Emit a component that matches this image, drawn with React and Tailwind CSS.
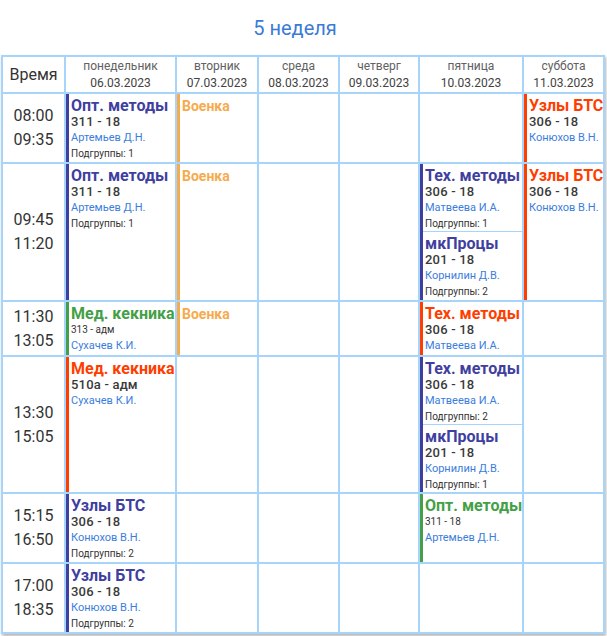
import React from "react";

const barClass = {
  indigo: "border-[#3f3f9f]",
  red: "border-[#ff3d00]",
  green: "border-[#43a047]",
  orange: "border-[#f5ab4e]",
};
const textClass = {
  indigo: "text-[#3f3f9f]",
  red: "text-[#ff3d00]",
  green: "text-[#43a047]",
  orange: "text-[#f5ab4e]",
};

function LessonBody({ c, title, room, small, teacher, group, mil, className = "" }) {
  return (
    <div className={"flex flex-col pl-[2px] pt-[4px] " + className}>
      <div
        className={
          "font-bold whitespace-nowrap leading-[16px] " +
          (mil ? "text-[14px] " : "text-[16px] ") +
          textClass[c]
        }
      >
        {title}
      </div>
      {room && (
        <div
          className={
            "leading-[16px] whitespace-nowrap " +
            (small ? "text-[10px] text-[#333]" : "text-[13px] font-medium tracking-[0.2px] text-[#3a3a3a]")
          }
        >
          {room}
        </div>
      )}
      {teacher && (
        <div className="leading-[16px] text-[11px] text-[#3b7ddd] whitespace-nowrap">{teacher}</div>
      )}
      {group && (
        <div className="leading-[16px] text-[10px] text-[#333] whitespace-nowrap">Подгруппы: {group}</div>
      )}
    </div>
  );
}

function Lesson(props) {
  return (
    <div className={"h-full bg-white border-l-[3px] " + barClass[props.c]}>
      <LessonBody {...props} />
    </div>
  );
}

function Double({ c, a, b }) {
  return (
    <div className={"h-full bg-white border-l-[3px] flex flex-col " + barClass[c]}>
      <LessonBody c={c} {...a} className="h-[68px] shrink-0 border-b border-[#a6d4fa]" />
      <LessonBody c={c} {...b} className="flex-1" />
    </div>
  );
}

function Cell({ children }) {
  return <div className="bg-white min-w-0">{children}</div>;
}

function Time({ a, b }) {
  return (
    <div className="bg-white flex flex-col items-center justify-center text-[16px] leading-[24px] text-[#333]">
      <div>{a}</div>
      <div>{b}</div>
    </div>
  );
}

function Head({ d, date }) {
  return (
    <div className="bg-white flex flex-col items-center justify-center text-[12px] leading-[17px]">
      <div className="text-[#616161]">{d}</div>
      <div className="text-[#424242]">{date}</div>
    </div>
  );
}

export default function App() {
  return (
    <div className="w-[607px] h-[636px] bg-white" style={{ fontFamily: "Roboto, 'Noto Sans', sans-serif" }}>
      <div className="h-[55px] pt-[14px] pr-[17px] text-center text-[20px] leading-[28px] text-[#3b7bd6]">5 неделя</div>
      <div className="ml-[1px] w-[604px] grid grid-cols-[61px_109px_80px_79px_78px_102px_79px] grid-rows-[35px_68px_136px_53px_135px_68px_68px] gap-[2px] p-[2px] bg-[#a6d4fa] shadow-[1px_2px_3px_rgba(0,0,0,0.3)]">
        <div className="bg-white flex items-center justify-center text-[16px] text-[#333]">Время</div>
        <Head d="понедельник" date="06.03.2023" />
        <Head d="вторник" date="07.03.2023" />
        <Head d="среда" date="08.03.2023" />
        <Head d="четверг" date="09.03.2023" />
        <Head d="пятница" date="10.03.2023" />
        <Head d="суббота" date="11.03.2023" />

        {/* row 1 */}
        <Time a="08:00" b="09:35" />
        <Lesson c="indigo" title="Опт. методы" room="311 - 18" teacher="Артемьев Д.Н." group="1" />
        <Lesson c="orange" title="Военка" mil />
        <Cell />
        <Cell />
        <Cell />
        <Lesson c="red" title="Узлы БТС" room="306 - 18" teacher="Конюхов В.Н." />

        {/* row 2 */}
        <Time a="09:45" b="11:20" />
        <Lesson c="indigo" title="Опт. методы" room="311 - 18" teacher="Артемьев Д.Н." group="1" />
        <Lesson c="orange" title="Военка" mil />
        <Cell />
        <Cell />
        <Double
          c="indigo"
          a={{ title: "Тех. методы", room: "306 - 18", teacher: "Матвеева И.А.", group: "1" }}
          b={{ title: "мкПроцы", room: "201 - 18", teacher: "Корнилин Д.В.", group: "2" }}
        />
        <Lesson c="red" title="Узлы БТС" room="306 - 18" teacher="Конюхов В.Н." />

        {/* row 3 */}
        <Time a="11:30" b="13:05" />
        <Lesson c="green" title="Мед. кекника" room="313 - адм" small teacher="Сухачев К.И." />
        <Lesson c="orange" title="Военка" mil />
        <Cell />
        <Cell />
        <Lesson c="red" title="Тех. методы" room="306 - 18" teacher="Матвеева И.А." />
        <Cell />

        {/* row 4 */}
        <Time a="13:30" b="15:05" />
        <Lesson c="red" title="Мед. кекника" room="510а - адм" teacher="Сухачев К.И." />
        <Cell />
        <Cell />
        <Cell />
        <Double
          c="indigo"
          a={{ title: "Тех. методы", room: "306 - 18", teacher: "Матвеева И.А.", group: "2" }}
          b={{ title: "мкПроцы", room: "201 - 18", teacher: "Корнилин Д.В.", group: "1" }}
        />
        <Cell />

        {/* row 5 */}
        <Time a="15:15" b="16:50" />
        <Lesson c="indigo" title="Узлы БТС" room="306 - 18" teacher="Конюхов В.Н." group="2" />
        <Cell />
        <Cell />
        <Cell />
        <Lesson c="green" title="Опт. методы" room="311 - 18" small teacher="Артемьев Д.Н." />
        <Cell />

        {/* row 6 */}
        <Time a="17:00" b="18:35" />
        <Lesson c="indigo" title="Узлы БТС" room="306 - 18" teacher="Конюхов В.Н." group="2" />
        <Cell />
        <Cell />
        <Cell />
        <Cell />
        <Cell />
      </div>
    </div>
  );
}
